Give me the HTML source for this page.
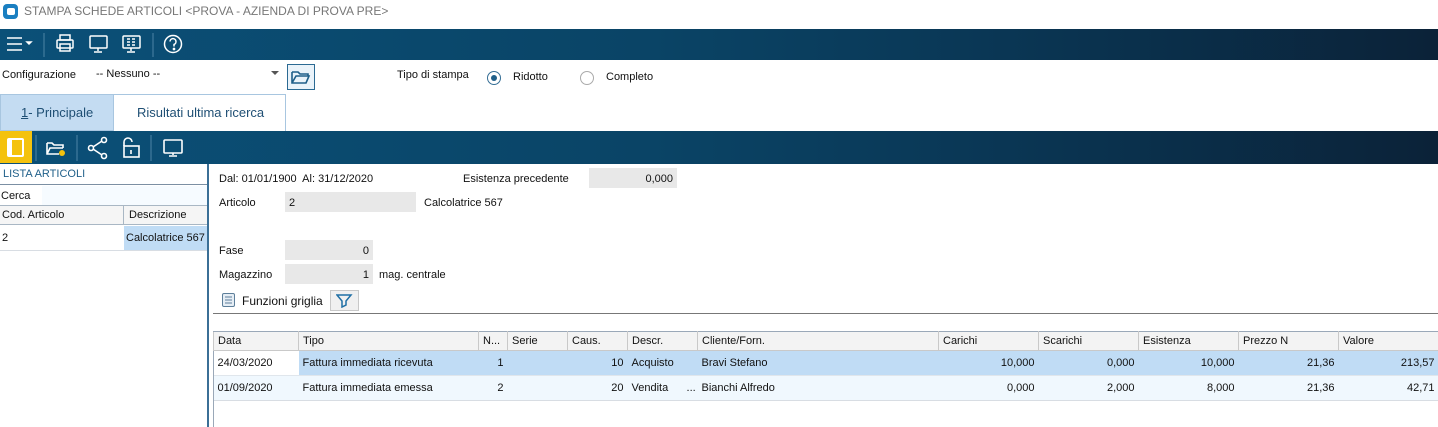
<!DOCTYPE html>
<html><head><meta charset="utf-8">
<style>
*{margin:0;padding:0;box-sizing:border-box}
body{width:1438px;height:427px;overflow:hidden;background:#fff;font-family:"Liberation Sans",Tahoma,sans-serif;font-size:11px;color:#111;position:relative}
.a{position:absolute;white-space:nowrap}
.bar{position:absolute;left:0;width:1438px;background:linear-gradient(90deg,#0b5078 0%,#0a4466 45%,#0a3654 70%,#0b2238 100%)}
.fld{position:absolute;background:#e8e8e8;height:20px;padding:5px 4px 0;text-align:right}
table{border-collapse:collapse;position:absolute;table-layout:fixed}
td{height:25px;padding:0 4px;white-space:nowrap;overflow:hidden}
th{font-weight:normal;text-align:left;height:19px;padding:0 4px;background:#f3f3f3;border:1px solid #c9c9c9;border-top:1px solid #9aa8b8}
.r{text-align:right}
svg{position:absolute}
</style></head><body>
<div class="a" style="left:3px;top:4px;width:15px;height:15px;border-radius:4px;background:#1a7fc1"></div>
<div class="a" style="left:7px;top:8px;width:8px;height:7px;border-radius:2px;background:#fff"></div>
<div class="a" style="left:24px;top:4px;font-size:12px;color:#777">STAMPA SCHEDE ARTICOLI &lt;PROVA - AZIENDA DI PROVA PRE&gt;</div>
<div class="bar" style="top:29px;height:31px"></div>
<svg style="left:0;top:29px" width="200" height="31" fill="none" stroke="#fff" stroke-width="1.5">
<path d="M7 9h15M7 15h15M7 21h15"/><path d="M27 13l2 2 2-2z" fill="#fff"/>
<path d="M44 4v24" stroke="#4d84a6" stroke-width="1"/>
<rect x="57" y="11" width="16" height="8" rx="1"/><rect x="60" y="6" width="10" height="5"/><rect x="60" y="15" width="10" height="7"/>
<rect x="90" y="7" width="17" height="12" rx="1"/><path d="M98 19v3M94 23h8"/>
<rect x="123" y="7" width="17" height="12" rx="1"/><path d="M127 10h3M132 10h3M127 13h3M132 13h3M127 16h3M132 16h3M131 19v3M127 23h8"/>
<path d="M153 4v24" stroke="#4d84a6" stroke-width="1"/>
<circle cx="173" cy="15" r="8.5"/><path d="M170 12.5a3 3 0 1 1 4 3v2"/><circle cx="174" cy="20" r=".6" fill="#fff"/>
</svg>
<div class="a" style="left:2px;top:69px">Configurazione</div>
<div class="a" style="left:96px;top:68px">-- Nessuno --</div>
<svg style="left:270px;top:70px" width="10" height="6"><path d="M1 1h8l-4 4z" fill="#555"/></svg>
<div class="a" style="left:287px;top:64px;width:28px;height:26px;border:1px solid #2b6a93;background:#eaf3fa"></div>
<svg style="left:291px;top:70px" width="20" height="15" fill="none" stroke="#1f5f89" stroke-width="1.6"><path d="M1 2h6l2 2h8v2M1 2v11h14l3-7H5l-4 7"/></svg>
<div class="a" style="left:397px;top:69px">Tipo di stampa</div>
<div class="a" style="left:487px;top:71px;width:14px;height:14px;border-radius:50%;border:1px solid #356e95"></div>
<div class="a" style="left:491px;top:75px;width:6px;height:6px;border-radius:50%;background:#1f5f89"></div>
<div class="a" style="left:513px;top:71px">Ridotto</div>
<div class="a" style="left:580px;top:71px;width:14px;height:14px;border-radius:50%;border:1px solid #aaa"></div>
<div class="a" style="left:606px;top:71px">Completo</div>
<div class="a" style="left:0;top:94px;width:114px;height:37px;background:#c4dcf2;border:1px solid #a8c6e0;font-size:13px;color:#1f4f74;padding:10px 0 0 20px"><u>1</u>- Principale</div>
<div class="a" style="left:113px;top:94px;width:173px;height:37px;background:#fff;border:1px solid #a8c6e0;border-bottom:none;font-size:13px;color:#1f4f74;padding:10px 0 0 23px">Risultati ultima ricerca</div>
<div class="bar" style="top:131px;height:33px"></div>
<div class="a" style="left:0;top:131px;width:32px;height:32px;background:#f4c20d"></div>
<svg style="left:0;top:131px" width="200" height="33" fill="none" stroke="#fff" stroke-width="1.6">
<rect x="7" y="7" width="17" height="19" rx="2" fill="#fff" stroke="none"/><rect x="12" y="9" width="10" height="15" fill="#f4c20d" stroke="none"/>
<path d="M36 4v26M77 4v26M151 4v26" stroke="#4d84a6" stroke-width="1"/>
<path d="M47 12h5l2 2h9v3M47 12v11h12M47 23l3-6h13"/><circle cx="62" cy="22" r="3" fill="#f4c20d" stroke="none"/>
<circle cx="104" cy="9" r="2.5"/><circle cx="104" cy="25" r="2.5"/><circle cx="91" cy="17" r="2.5"/><path d="M93 16l9-6M93 18l9 6"/>
<path d="M124 15v-4a4 4 0 0 1 8 0"/><rect x="124" y="15" width="15" height="11"/><path d="M131 19v4"/>
<rect x="164" y="9" width="18" height="13" rx="1"/><path d="M173 22v2M169 25h8"/>
</svg>
<div class="a" style="left:0;top:164px;width:208px;height:21px;border-bottom:1px solid #7b8fa3;color:#1f5f89;padding:4px 3px">LISTA ARTICOLI</div>
<div class="a" style="left:0;top:186px;width:207px;height:20px;padding:4px 1px">Cerca</div>
<div class="a" style="left:42px;top:186px;width:165px;height:20px;background:#f6fbff"></div>
<div class="a" style="left:0;top:205px;width:207px;height:20px;border-top:1px solid #a9b7c4;border-bottom:1px solid #a9b7c4;background:#f5f5f5"></div>
<div class="a" style="left:2px;top:209px">Cod. Articolo</div>
<div class="a" style="left:123px;top:206px;height:19px;border-left:1px solid #a9b7c4"></div>
<div class="a" style="left:129px;top:209px">Descrizione</div>
<div class="a" style="left:2px;top:232px">2</div>
<div class="a" style="left:124px;top:226px;width:83px;height:24px;background:#c0dcf5;padding:6px 2px;overflow:hidden">Calcolatrice 567</div>
<div class="a" style="left:0;top:250px;width:207px;border-top:1px solid #d8dde3"></div>
<div class="a" style="left:207px;top:164px;width:2px;height:263px;background:#3b6f96"></div>
<div class="a" style="left:219px;top:173px">Dal: 01/01/1900&nbsp; Al: 31/12/2020</div>
<div class="a" style="left:463px;top:173px">Esistenza precedente</div>
<div class="fld" style="left:589px;top:168px;width:88px">0,000</div>
<div class="a" style="left:219px;top:197px">Articolo</div>
<div class="fld" style="left:285px;top:192px;width:131px;text-align:left">2</div>
<div class="a" style="left:424px;top:197px">Calcolatrice 567</div>
<div class="a" style="left:219px;top:245px">Fase</div>
<div class="fld" style="left:285px;top:240px;width:88px">0</div>
<div class="a" style="left:219px;top:269px">Magazzino</div>
<div class="fld" style="left:285px;top:264px;width:88px">1</div>
<div class="a" style="left:379px;top:269px">mag. centrale</div>
<svg style="left:221px;top:292px" width="16" height="16" fill="none" stroke="#5d7f9a" stroke-width="1"><rect x="1.5" y="1.5" width="12" height="13" rx="1.5" fill="#e6eef5"/><path d="M4 5h7M4 8h7M4 11h7"/></svg>
<div class="a" style="left:242px;top:294px;font-size:12px">Funzioni griglia</div>
<div class="a" style="left:330px;top:290px;width:29px;height:21px;border:1px solid #c8c8c8;background:#f0f0f0"></div>
<svg style="left:336px;top:293px" width="17" height="15" fill="none" stroke="#1f6fa5" stroke-width="1.5"><path d="M1 2h14l-5 6v4l-4 2V8z"/></svg>
<div class="a" style="left:213px;top:313px;width:1225px;border-top:1px solid #777"></div>
<div class="a" style="left:213px;top:331px;width:1px;height:96px;background:#9aa8b8"></div>
<table style="left:213px;top:331px;width:1225px">
<colgroup><col style="width:85px"><col style="width:180px"><col style="width:29px"><col style="width:60px"><col style="width:60px"><col style="width:70px"><col style="width:241px"><col style="width:100px"><col style="width:100px"><col style="width:100px"><col style="width:100px"><col style="width:100px"></colgroup>
<tr><th>Data</th><th>Tipo</th><th>N...</th><th>Serie</th><th>Caus.</th><th>Descr.</th><th>Cliente/Forn.</th><th>Carichi</th><th>Scarichi</th><th>Esistenza</th><th>Prezzo N</th><th>Valore</th></tr>
<tr style="background:#c0dcf5;border-bottom:1px solid #e0e6ec"><td style="background:#fff">24/03/2020</td><td>Fattura immediata ricevuta</td><td class="r">1</td><td></td><td class="r">10</td><td>Acquisto</td><td>Bravi Stefano</td><td class="r">10,000</td><td class="r">0,000</td><td class="r">10,000</td><td class="r">21,36</td><td class="r">213,57</td></tr>
<tr style="background:#f0f8fe;border-bottom:1px solid #d8dde3"><td>01/09/2020</td><td>Fattura immediata emessa</td><td class="r">2</td><td></td><td class="r">20</td><td>Vendita &nbsp;&nbsp;&nbsp;&nbsp;&nbsp;...</td><td>Bianchi Alfredo</td><td class="r">0,000</td><td class="r">2,000</td><td class="r">8,000</td><td class="r">21,36</td><td class="r">42,71</td></tr>
</table>
</body></html>
